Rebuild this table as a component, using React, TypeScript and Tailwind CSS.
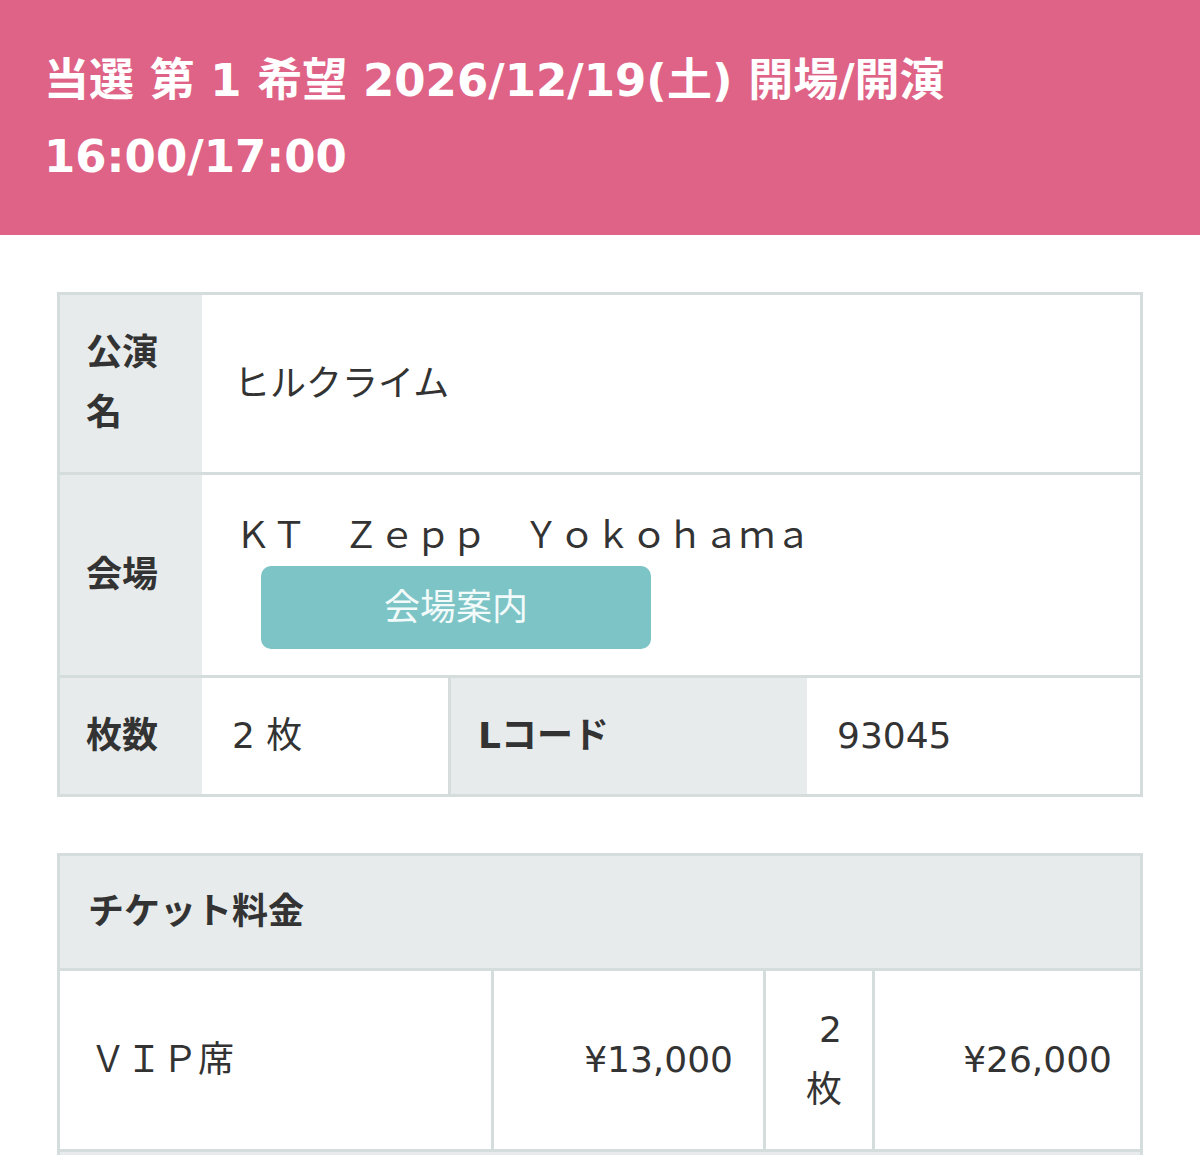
import React from "react";

const FONT = {
  fontFamily: '"DejaVu Sans", "Noto Sans CJK JP", sans-serif',
};

// Ticket result detail page
const App: React.FC = () => {
  return (
    <div className="min-h-screen bg-white text-[#333]" style={FONT}>
      {/* Header */}
      <div className="bg-[#de6386] px-[44px] pt-[43px] pb-[40px]">
        <h1 className="text-[45px] font-bold leading-[76px] text-white">
          当選 第 1 希望 2026/12/19(土) 開場/開演 16:00/17:00
        </h1>
      </div>

      <div className="px-[57px] pt-[57px] pb-[57px]">
        {/* Performance info */}
        <div className="border-[3px] border-[#d5dcdc] text-[36px] leading-[60px]">
          <div className="flex border-b-[3px] border-[#d5dcdc]">
            <div className="w-[142px] shrink-0 bg-[#e7ebeb] pl-[26px] pr-[26px] pt-[28px] pb-[29px] font-bold">
              公演名
            </div>
            <div className="flex flex-1 items-center pl-[32px]">ヒルクライム</div>
          </div>

          <div className="flex border-b-[3px] border-[#d5dcdc]">
            <div className="flex w-[142px] shrink-0 items-center bg-[#e7ebeb] pl-[26px] font-bold">
              会場
            </div>
            <div className="flex-1 pl-[33px] pt-[31px] pb-[26px]">
              <div>ＫＴ　Ｚｅｐｐ　Ｙｏｋｏｈａｍａ</div>
              <button className="ml-[26px] block h-[83px] w-[390px] rounded-[10px] bg-[#7dc4c6] text-[36px] text-[#f2fafa]">
                会場案内
              </button>
            </div>
          </div>

          <div className="flex">
            <div className="w-[142px] shrink-0 bg-[#e7ebeb] pl-[26px] py-[28px] font-bold">
              枚数
            </div>
            <div className="w-[249px] shrink-0 border-r-[3px] border-[#d5dcdc] pl-[30px] py-[28px]">
              2 枚
            </div>
            <div className="w-[356px] shrink-0 bg-[#e7ebeb] pl-[27px] py-[28px] font-bold">
              Lコード
            </div>
            <div className="flex-1 pl-[30px] py-[28px]">93045</div>
          </div>
        </div>

        {/* Ticket price */}
        <div className="mt-[56px] border-[3px] border-[#d5dcdc] text-[36px] leading-[60px]">
          <div className="border-b-[3px] border-[#d5dcdc] bg-[#e7ebeb] pl-[28px] py-[26px] font-bold">
            チケット料金
          </div>
          <div className="flex border-b-[3px] border-[#d5dcdc]">
            <div className="flex w-[431px] shrink-0 items-center pl-[30px]">ＶＩＰ席</div>
            <div className="flex w-[272px] shrink-0 items-center justify-end border-l-[3px] border-[#d5dcdc] pr-[30px]">
              ¥13,000
            </div>
            <div className="w-[109px] shrink-0 border-l-[3px] border-[#d5dcdc] px-[30px] py-[29px] text-right">
              2 枚
            </div>
            <div className="flex flex-1 items-center justify-end border-l-[3px] border-[#d5dcdc] pr-[28px]">
              ¥26,000
            </div>
          </div>
          <div className="h-[118px] bg-[#e7ebeb]" />
        </div>
      </div>
    </div>
  );
};

export default App;
